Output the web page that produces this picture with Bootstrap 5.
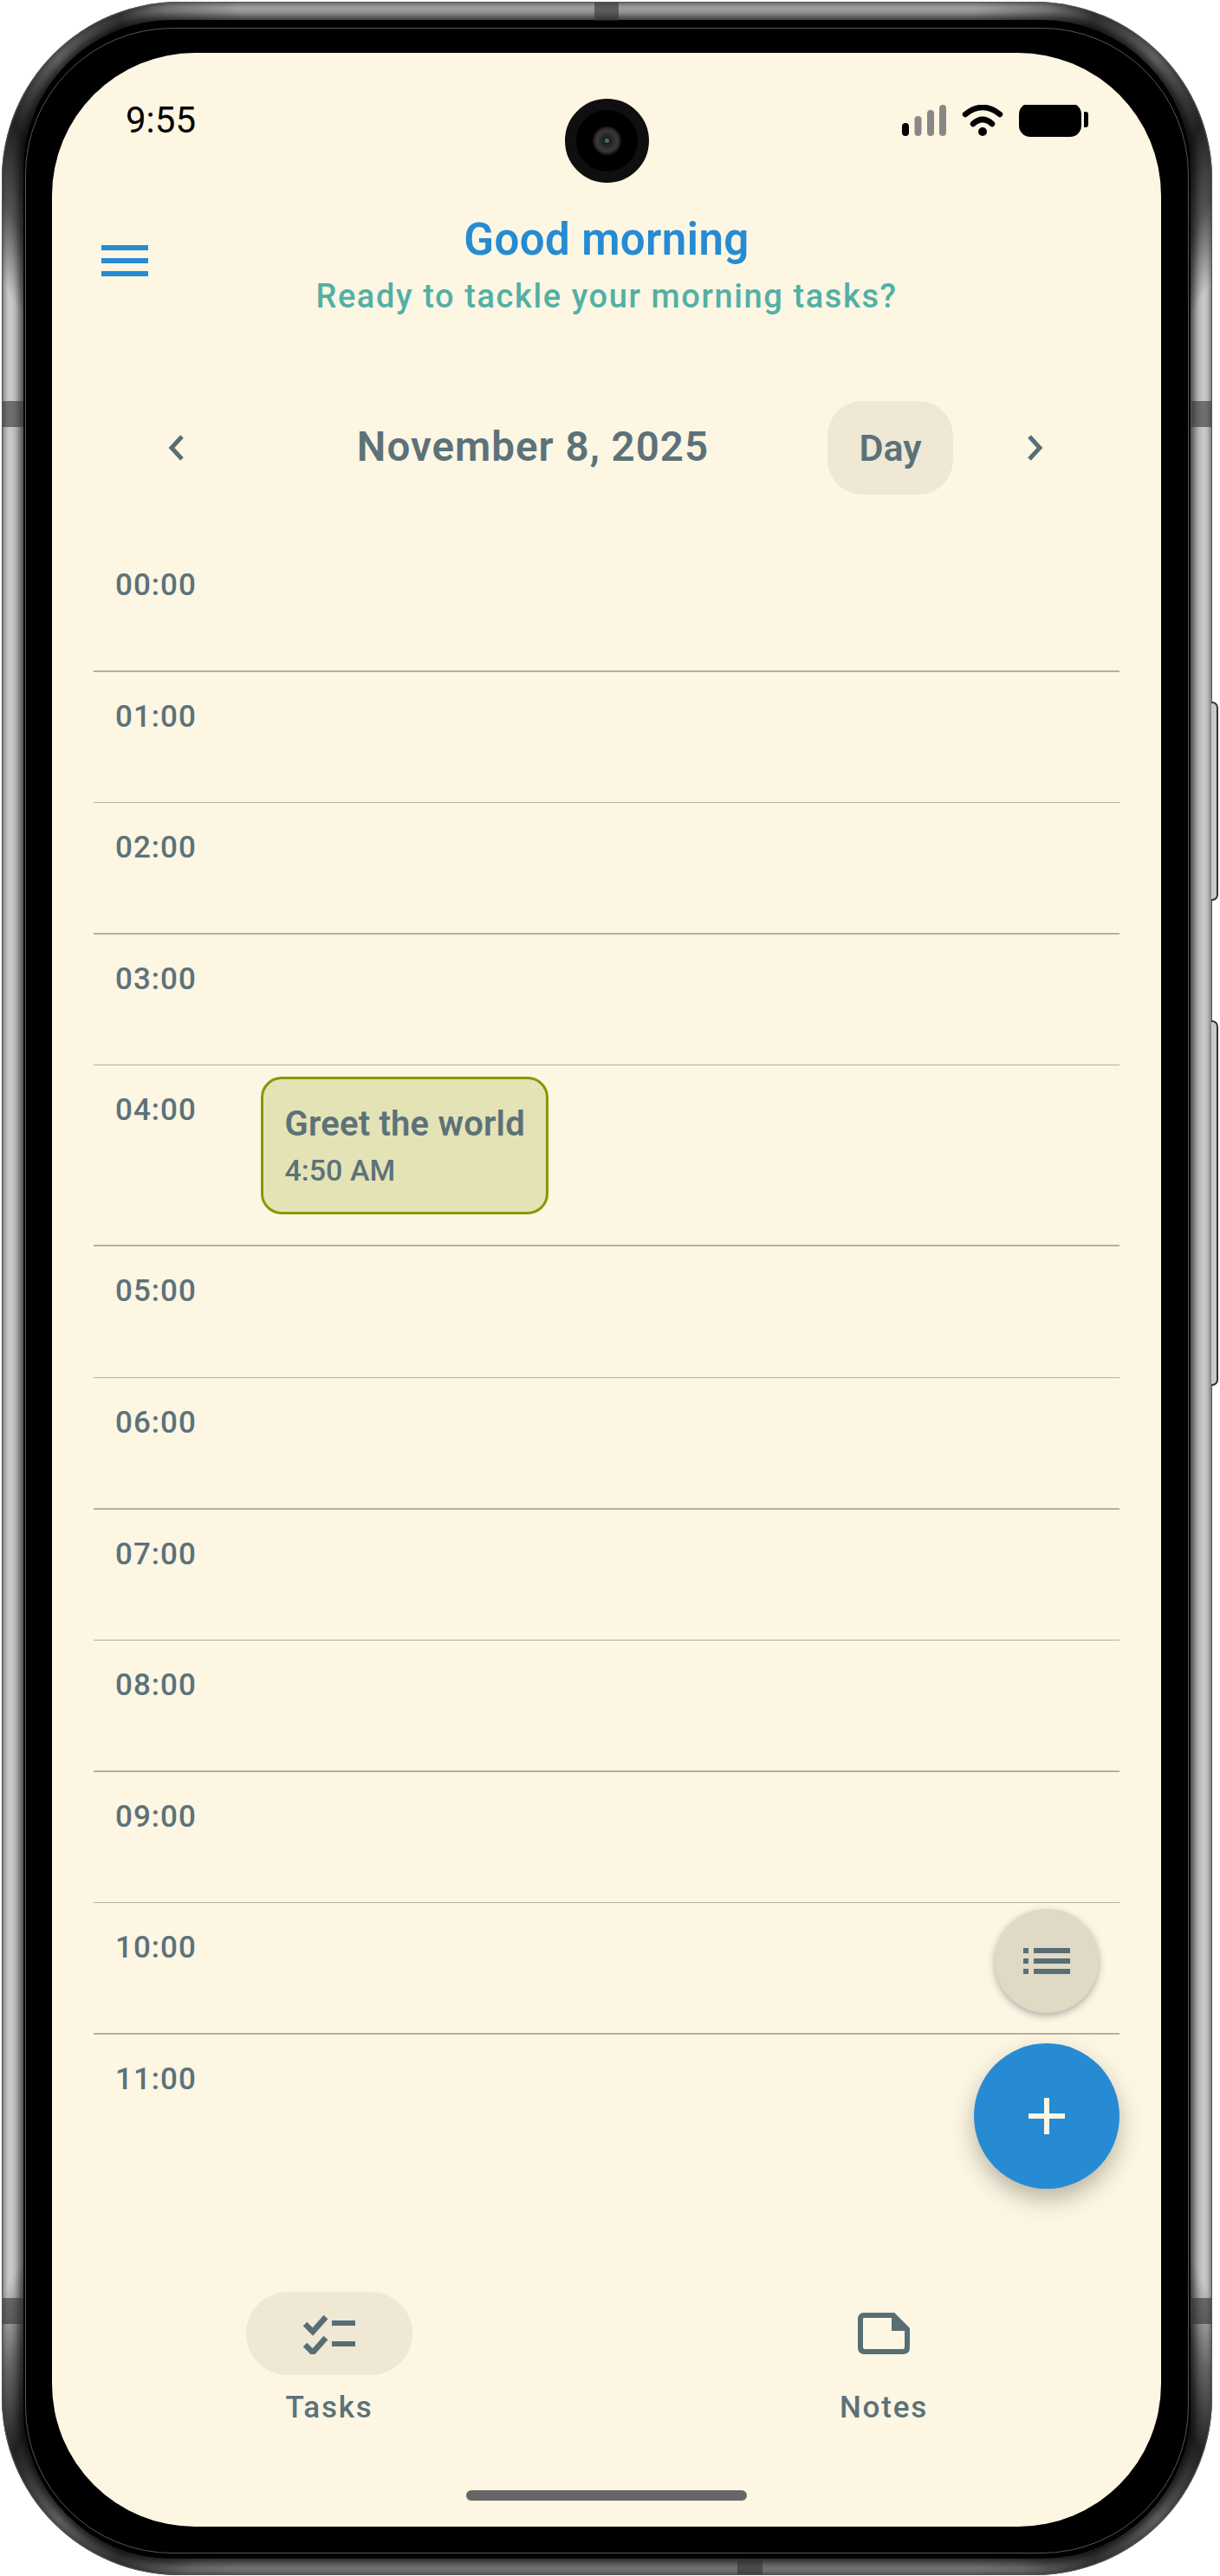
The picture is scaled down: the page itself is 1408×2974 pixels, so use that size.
<!DOCTYPE html>
<html lang="en">
<head>
    <meta charset="UTF-8">
    <meta name="viewport" content="width=device-width, initial-scale=1.0">
    <title>Tasks</title>
    <link rel="stylesheet" href="https://cdn.jsdelivr.net/npm/bootstrap@5.3.0/dist/css/bootstrap.min.css">
    <style>
        html, body { background: #fff; margin: 0; }
        body { font-family: Roboto, "Liberation Sans", sans-serif; color: #5c7279; }

        /* device frame */
        .phone-wrap { position: relative; width: 1408px; height: 2974px; padding: 2px 9px 1px 2px; }
        .shell {
            position: relative; height: 100%; padding: 21px 25px 19px 25px; border-radius: 205px;
            background: conic-gradient(from 0deg at 50% 50%,
                #a2a2a2 0deg, #a2a2a2 16deg, #777 19deg, #333 21deg, #666 24deg, #222 27deg, #555 29deg, #c8c8c8 31deg,
                #c8c8c8 149deg, #666 151deg, #222 153deg, #666 156deg, #333 159deg, #6a6a6a 162deg,
                #777 164deg, #777 196deg, #6a6a6a 198deg, #333 201deg, #666 204deg, #222 207deg, #666 209deg, #c8c8c8 211deg,
                #c8c8c8 329deg, #555 331deg, #222 333deg, #666 336deg, #333 339deg, #777 341deg, #a2a2a2 344deg);
            box-shadow: inset 0 0 0 1px #555, inset 0 0 5px 3px rgba(40, 40, 40, .55);
        }
        .bezel {
            position: relative; height: 100%; padding: 38px 34px 37px 33px; background: #000; border-radius: 172px;
            box-shadow: 0 0 9px 5px rgba(0, 0, 0, .65);
        }
        .bezel::before {
            content: ""; position: absolute; inset: 9px 2px 6px 2px;
            border: 1px solid #555; border-radius: 170px;
        }
        .side-key {
            position: absolute; left: 1398px; width: 8px; background: #c9c9c9;
            border: 2px solid #333; border-left: 0; border-radius: 0 7px 7px 0;
        }
        .key-a { top: 810px; height: 230px; }
        .key-b { top: 1178px; height: 422px; }
        .band { position: absolute; background: rgba(50, 50, 50, .6); }
        .band-l { left: 3px; width: 24px; height: 30px; }
        .band-r { left: 1375px; width: 23px; height: 30px; }
        .band-t { top: 3px; left: 686px; width: 28px; height: 21px; }
        .band-b { top: 2954px; left: 851px; width: 29px; height: 18px; }

        /* screen */
        .screen-area {
            position: relative; height: 100%; background: #fdf6e3; border-radius: 165px; overflow: hidden;
            display: flex; flex-direction: column;
        }
        .cam-hole {
            position: absolute; top: 53px; left: 592px; width: 97px; height: 97px; border-radius: 50%;
            background: #000; border: 13px solid #0f0f0f;
        }
        .cam-lens {
            position: absolute; top: 19px; left: 19px; width: 33px; height: 33px; border-radius: 50%;
            background: radial-gradient(circle at 50% 50%, #3f6f80 0 2px, #1c1c1c 3px, #3a3a3a 12px, #161616 16px);
        }
        .status-row { height: 139px; padding: 57px 84px 0 85px; color: #000; }
        .status-time { font-size: 42px; line-height: 42px; }
        .status-icons { margin-top: 3px; }

        .top-head { display: grid; grid-template-columns: 1fr auto 1fr; height: 263px; padding-top: 42px; }
        .menu-btn { margin: 41px 0 0 57px; width: 54px; height: 36px; }
        .hello { font-size: 51px; font-weight: 600; line-height: 70px; letter-spacing: .4px; color: #268bd2; }
        .hello-sub { font-size: 38px; font-weight: 500; line-height: 60px; letter-spacing: 1.6px; color: #52b0a5; }

        .date-row { height: 108px; padding: 0 97px 0 95px; }
        .chev-btn { width: 96px; height: 96px; background: none; border: 0; padding: 0; }
        .date-text { padding-left: 24px; font-size: 47.500px; font-weight: 600; letter-spacing: 1px; }
        .day-pill { width: 145px; height: 108px; margin-right: 47px; border-radius: 40px; background: #eee8d5; font-size: 43px; font-weight: 600; }

        .hours { margin: 53px 48px 0; }
        .hour-row { display: flex; height: 151.6px; border-bottom: 1px solid #b6b09f; }
        .hour-row:nth-child(odd) { border-bottom-width: 2px; }
        .hour-row.has-event { height: 209px; }
        .hour-txt { width: 192.5px; padding: 27px 0 0 25px; font-size: 35px; line-height: 50px; font-weight: 500; letter-spacing: 1px; }
        .event-box {
            width: 332px; height: 159px; margin-top: 13px; padding: 27px 25px 0; border: 3px solid #859900; border-radius: 24px;
            background: #e4e3b5;
        }
        .event-title { font-size: 40px; line-height: 50px; font-weight: 600; letter-spacing: .2px; white-space: nowrap; }
        .event-time { font-size: 34px; line-height: 50px; font-weight: 500; margin-top: 3px; }

        .fab-sm {
            position: absolute; top: 2143px; left: 1088px; width: 120px; height: 120px; border-radius: 50%;
            background: #dfd9c5; box-shadow: 0 3px 8px rgba(80, 80, 90, .45);
        }
        .fab-lg {
            position: absolute; top: 2298px; left: 1064px; width: 168px; height: 168px; border-radius: 50%;
            background: #268bd2; box-shadow: 0 12px 26px rgba(60, 60, 50, .35);
        }

        .bottom-nav { margin-top: auto; padding-bottom: 112px; }
        .nav-cell { width: 640px; }
        .nav-ico { width: 192px; height: 96px; border-radius: 48px; }
        .nav-ico.is-on { background: #eee8d5; }
        .nav-txt { font-size: 35px; line-height: 50px; font-weight: 500; letter-spacing: 1.8px; margin-top: 13px; }
        .home-bar { position: absolute; top: 2814px; left: 478px; width: 324px; height: 12px; border-radius: 6px; background: #666; }
    </style>
</head>
<body>
    <div class="phone-wrap">
        <div class="shell">
            <div class="bezel">
                <div class="screen-area">
                    <div class="cam-hole"><div class="cam-lens"></div></div>

                    <div class="status-row d-flex justify-content-between align-items-start">
                        <span class="status-time">9:55</span>
                        <svg class="status-icons" width="215" height="40" viewBox="0 0 215 40">
                            <rect x="0" y="21" width="8" height="15" rx="4" fill="#000"/>
                            <rect x="14.500" y="13" width="8" height="23" rx="4" fill="#888"/>
                            <rect x="29" y="6" width="8" height="30" rx="4" fill="#888"/>
                            <rect x="43" y="0" width="8" height="36" rx="4" fill="#888"/>
                            <path d="M73 11 Q93 -5 113 11" fill="none" stroke="#000" stroke-width="6.500" stroke-linecap="round"/>
                            <path d="M82 22 Q93 12 104 22" fill="none" stroke="#000" stroke-width="6.500" stroke-linecap="round"/>
                            <circle cx="93" cy="31" r="5" fill="#000"/>
                            <rect x="135" y="-2" width="72" height="39" rx="13" fill="#000"/>
                            <path d="M210 8 h2 q3 0 3 3 v12 q0 3 -3 3 h-2 z" fill="#000"/>
                        </svg>
                    </div>

                    <div class="top-head">
                        <div class="menu-btn d-flex flex-column justify-content-between">
                            <svg width="54" height="36" viewBox="0 0 54 36">
                                <rect y="0" width="54" height="6" fill="#268bd2"/>
                                <rect y="15" width="54" height="6" fill="#268bd2"/>
                                <rect y="30" width="54" height="6" fill="#268bd2"/>
                            </svg>
                        </div>
                        <div class="text-center">
                            <div class="hello">Good morning</div>
                            <div class="hello-sub">Ready to tackle your morning tasks?</div>
                        </div>
                        <div></div>
                    </div>

                    <div class="date-row d-flex align-items-center">
                        <button class="chev-btn d-flex align-items-center justify-content-center" aria-label="Previous">
                            <svg width="18" height="30" viewBox="0 0 18 30"><path d="M16 2 L4 15 L16 28" fill="none" stroke="#586e75" stroke-width="5"/></svg>
                        </button>
                        <div class="date-text flex-grow-1 text-center">November 8, 2025</div>
                        <div class="day-pill d-flex align-items-center justify-content-center">Day</div>
                        <button class="chev-btn d-flex align-items-center justify-content-center" aria-label="Next">
                            <svg width="18" height="30" viewBox="0 0 18 30"><path d="M2 2 L14 15 L2 28" fill="none" stroke="#586e75" stroke-width="5"/></svg>
                        </button>
                    </div>

                    <div class="hours" id="hourList"></div>

                    <div class="fab-sm d-flex align-items-center justify-content-center">
                        <svg width="54" height="30" viewBox="0 0 54 30">
                            <path d="M0 0h6v6H0zM12 0h42v6H12zM0 12h6v6H0zM12 12h42v6H12zM0 24h6v6H0zM12 24h42v6H12z" fill="#586e75"/>
                        </svg>
                    </div>
                    <div class="fab-lg d-flex align-items-center justify-content-center">
                        <svg width="42" height="42" viewBox="0 0 42 42"><path d="M18 0h6v18h18v6H24v18h-6V24H0v-6h18z" fill="#fdf6e3"/></svg>
                    </div>

                    <div class="bottom-nav d-flex">
                        <div class="nav-cell d-flex flex-column align-items-center">
                            <div class="nav-ico is-on d-flex align-items-center justify-content-center">
                                <svg width="60" height="48" viewBox="0 0 60 48">
                                    <path d="M2 13 L11 22 L26 5 M2 37 L11 46 L26 29" fill="none" stroke="#586e75" stroke-width="6.500"/>
                                    <path d="M33 9h27v6H33zM33 33h27v6H33z" fill="#586e75"/>
                                </svg>
                            </div>
                            <div class="nav-txt">Tasks</div>
                        </div>
                        <div class="nav-cell d-flex flex-column align-items-center">
                            <div class="nav-ico d-flex align-items-center justify-content-center">
                                <svg width="60" height="48" viewBox="0 0 60 48">
                                    <path d="M7 3 H41 L57 19 V40 Q57 45 52 45 H8 Q3 45 3 40 V8 Q3 3 7 3 Z" fill="none" stroke="#586e75" stroke-width="6"/>
                                    <path d="M39 3 L57 21 H39 Z" fill="#586e75"/>
                                </svg>
                            </div>
                            <div class="nav-txt">Notes</div>
                        </div>
                    </div>

                    <div class="home-bar"></div>
                </div>
            </div>
        </div>
        <div class="side-key key-a"></div>
        <div class="side-key key-b"></div>
        <div class="band band-l" style="top:463px"></div>
        <div class="band band-r" style="top:463px"></div>
        <div class="band band-l" style="top:2653px"></div>
        <div class="band band-r" style="top:2653px"></div>
        <div class="band band-t"></div>
        <div class="band band-b"></div>
    </div>

    <script>
        const lista = document.getElementById('hourList');
        for (let h = 0; h < 12; h++) {
            const etiqueta = String(h).padStart(2, '0') + ':00';
            const evento = h === 4
                ? '<div class="event-box"><div class="event-title">Greet the world</div><div class="event-time">4:50 AM</div></div>'
                : '';
            const fila = document.createElement('div');
            fila.className = 'hour-row' + (h === 4 ? ' has-event' : '');
            fila.innerHTML = `<div class="hour-txt">${etiqueta}</div>${evento}`;
            lista.appendChild(fila);
        }
        lista.lastChild.style.borderBottom = '0';
    </script>
    <script src="https://cdn.jsdelivr.net/npm/bootstrap@5.3.0/dist/js/bootstrap.bundle.min.js"></script>
</body>
</html>
